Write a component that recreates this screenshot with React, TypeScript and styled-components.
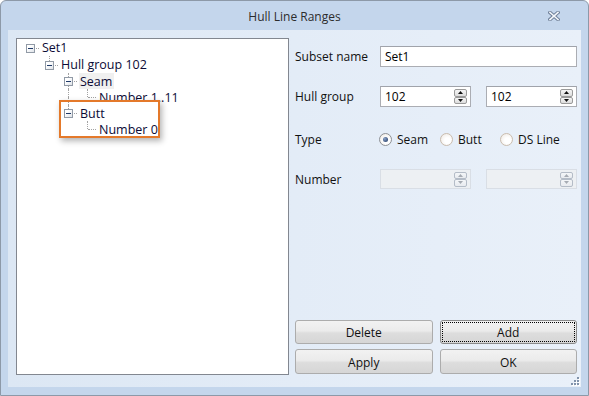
import React from 'react';
import styled, { createGlobalStyle, css } from 'styled-components';

type TreeNode = {
  label: string;
  cells: CellKind[];
  h: number;
  selected?: boolean;
};

type CellKind = 'blank' | 'pipe' | 'root' | 'first' | 'mid' | 'last' | 'leaf';

const nodes: TreeNode[] = [
  { label: 'Set1', cells: ['root'], h: 17 },
  { label: 'Hull group 102', cells: ['blank', 'first'], h: 17 },
  { label: 'Seam', cells: ['blank', 'blank', 'mid'], h: 16, selected: true },
  { label: 'Number 1..11', cells: ['blank', 'blank', 'pipe', 'leaf'], h: 16 },
  { label: 'Butt', cells: ['blank', 'blank', 'last'], h: 16 },
  { label: 'Number 0', cells: ['blank', 'blank', 'blank', 'leaf'], h: 16 },
];

const App = () => {
  return (
    <>
      <GlobalStyle />
      <Window>
        <TitleBar>
          <span />
          <Title>Hull Line Ranges</Title>
          <CloseButton>
            <svg width="12" height="10" viewBox="0 0 12 10">
              <path d="M2 1.5 L10 8.5 M10 1.5 L2 8.5" stroke="#71829b" strokeWidth="3.6" strokeLinecap="square" />
              <path d="M2 1.5 L10 8.5 M10 1.5 L2 8.5" stroke="#f4f7fb" strokeWidth="1.6" strokeLinecap="square" />
            </svg>
          </CloseButton>
        </TitleBar>
        <Client>
          <TreePanel>
            {nodes.map((node) => (
              <TreeRow key={node.label} $h={node.h}>
                {node.cells.map((kind, i) => (
                  <TreeCell key={i}>
                    {(kind === 'pipe' || kind === 'first' || kind === 'mid' || kind === 'last' || kind === 'leaf') && <LineUp />}
                    {(kind === 'pipe' || kind === 'mid') && <LineDown />}
                    {kind !== 'blank' && kind !== 'pipe' && <LineRight />}
                    {kind !== 'blank' && kind !== 'pipe' && kind !== 'leaf' && (
                      <Expander>
                        <Minus />
                      </Expander>
                    )}
                  </TreeCell>
                ))}
                <NodeLabel $selected={node.selected}>{node.label}</NodeLabel>
              </TreeRow>
            ))}
            <Callout />
          </TreePanel>
          <SidePanel>
            <FormGrid>
              <Label>Subset name</Label>
              <TextBox $span>Set1</TextBox>

              <Label>Hull group</Label>
              <SpinBox value="102" />
              <SpinBox value="102" />

              <Label $shift>Type</Label>
              <RadioGroup>
                <RadioItem $w={61}>
                  <RadioCircle $checked />
                  Seam
                </RadioItem>
                <RadioItem $w={60}>
                  <RadioCircle />
                  Butt
                </RadioItem>
                <RadioItem>
                  <RadioCircle />
                  DS Line
                </RadioItem>
              </RadioGroup>

              <Label>Number</Label>
              <SpinBox disabled />
              <SpinBox disabled />
            </FormGrid>
            <ButtonGrid>
              <PushButton>Delete</PushButton>
              <PushButton $focused>Add</PushButton>
              <PushButton>Apply</PushButton>
              <PushButton>OK</PushButton>
            </ButtonGrid>
          </SidePanel>
          <Grip>
            <svg width="10" height="10" viewBox="0 0 10 10">
              {[
                [7, 1],
                [4, 4],
                [7, 4],
                [1, 7],
                [4, 7],
                [7, 7],
              ].map(([x, y]) => (
                <g key={`${x}-${y}`}>
                  <rect x={x + 1} y={y + 1} width="2" height="2" fill="#ffffff" />
                  <rect x={x} y={y} width="2" height="2" fill="#8193ab" />
                </g>
              ))}
            </svg>
          </Grip>
        </Client>
      </Window>
    </>
  );
};

const SpinBox = ({ value, disabled }: { value?: string; disabled?: boolean }) => (
  <SpinField $disabled={disabled}>
    <SpinValue>{value}</SpinValue>
    <SpinButtons>
      <SpinHalf $disabled={disabled}>
        <svg width="5" height="3" viewBox="0 0 5 3">
          <path d="M2.5 0 L5 3 L0 3 Z" fill={disabled ? '#a6abb3' : '#111'} />
        </svg>
      </SpinHalf>
      <SpinHalf $disabled={disabled}>
        <svg width="5" height="3" viewBox="0 0 5 3">
          <path d="M0 0 L5 0 L2.5 3 Z" fill={disabled ? '#a6abb3' : '#111'} />
        </svg>
      </SpinHalf>
    </SpinButtons>
  </SpinField>
);

export default App;

const GlobalStyle = createGlobalStyle`
  body {
    margin: 0;
    font-family: "Open Sans", "Noto Sans", sans-serif;
    font-size: 12px;
  }
`;

const Window = styled.div`
  box-sizing: border-box;
  width: 589px;
  height: 396px;
  display: flex;
  flex-direction: column;
  background: #c4d6ec;
  border: 1px solid #8d99a8;
  border-radius: 6px 6px 0 0;
  overflow: hidden;
`;

const TitleBar = styled.div`
  height: 29px;
  flex-shrink: 0;
  display: grid;
  grid-template-columns: 1fr auto 1fr;
  align-items: center;
`;

const Title = styled.div`
  color: #2c2c2c;
  font-size: 12px;
  padding-top: 1px;
`;

const CloseButton = styled.div`
  justify-self: end;
  margin-right: 28px;
  display: flex;
  padding-top: 1px;
`;

const Client = styled.div`
  flex: 1;
  position: relative;
  display: flex;
  gap: 6px;
  margin: 0 7px 8px 7px;
  padding: 8px 4px 12px 8px;
  background: linear-gradient(90deg, #dce7f4 0%, #e3ecf7 50%, #e9f0f9 100%);
`;

const TreePanel = styled.div`
  position: relative;
  width: 273px;
  box-sizing: border-box;
  flex-shrink: 0;
  background: #ffffff;
  border: 1px solid #828790;
  padding: 0 0 0 4px;
  font-size: 12.5px;
  color: #0b0b36;
`;

const TreeRow = styled.div<{ $h: number }>`
  display: flex;
  align-items: stretch;
  height: ${(p) => p.$h}px;
`;

const TreeCell = styled.div`
  position: relative;
  width: 19px;
  flex-shrink: 0;
`;

const dotted = css`
  position: absolute;
  border-color: #a2a2a2;
  border-style: dotted;
  border-width: 0;
`;

const LineUp = styled.span`
  ${dotted};
  left: 9px;
  top: 0;
  height: 50%;
  border-left-width: 1px;
`;

const LineDown = styled.span`
  ${dotted};
  left: 9px;
  top: 50%;
  bottom: 0;
  border-left-width: 1px;
`;

const LineRight = styled.span`
  ${dotted};
  left: 10px;
  right: 1px;
  top: 50%;
  border-top-width: 1px;
`;

const Expander = styled.span`
  position: absolute;
  left: 5px;
  top: 50%;
  margin-top: -4px;
  width: 9px;
  height: 9px;
  box-sizing: border-box;
  border: 1px solid #919aa6;
  background: linear-gradient(135deg, #ffffff 30%, #dfe3e8 100%);
  display: flex;
  align-items: center;
  justify-content: center;
`;

const Minus = styled.span`
  width: 5px;
  height: 1px;
  background: #1f3a68;
`;

const NodeLabel = styled.span<{ $selected?: boolean }>`
  margin-left: 1px;
  padding: 1px 2px 0 1px;
  line-height: 15px;
  white-space: nowrap;
  background: ${(p) => (p.$selected ? '#f0f0f0' : 'transparent')};
`;

const Callout = styled.div`
  position: absolute;
  left: 42px;
  top: 61px;
  width: 101px;
  height: 38px;
  box-sizing: border-box;
  border: 2px solid #e4792a;
  box-shadow: 2px 3px 6px rgba(0, 0, 0, 0.3);
`;

const SidePanel = styled.div`
  flex: 1;
  display: flex;
  flex-direction: column;
`;

const FormGrid = styled.div`
  display: grid;
  grid-template-columns: 70px 1fr 1fr;
  grid-template-rows: 21px 21px 24px 20px;
  column-gap: 15px;
  row-gap: 19px;
  padding-top: 8px;
  align-items: center;
`;

const Label = styled.div<{ $shift?: boolean }>`
  color: #111;
  white-space: nowrap;
  ${(p) => p.$shift && 'padding-top: 2px;'}
`;

const fieldFrame = css`
  box-sizing: border-box;
  height: 100%;
  border: 1px solid #abadb3;
  border-top-color: #a0a3aa;
  background: #ffffff;
`;

const TextBox = styled.div<{ $span?: boolean }>`
  ${fieldFrame};
  grid-column: ${(p) => (p.$span ? '2 / 4' : 'auto')};
  display: flex;
  align-items: center;
  padding-left: 4px;
  color: #000;
`;

const SpinField = styled.div<{ $disabled?: boolean }>`
  ${fieldFrame};
  display: flex;
  align-items: center;
  padding: 0 3px 0 4px;
  ${(p) =>
    p.$disabled &&
    css`
      background: #edf0f3;
      border-color: #d9dee5;
    `}
`;

const SpinValue = styled.span`
  flex: 1;
  color: #000;
`;

const SpinButtons = styled.div`
  width: 13px;
  height: 15px;
  display: flex;
  flex-direction: column;
`;

const SpinHalf = styled.div<{ $disabled?: boolean }>`
  flex: 1;
  box-sizing: border-box;
  display: flex;
  align-items: center;
  justify-content: center;
  border: 1px solid ${(p) => (p.$disabled ? '#b4bcc7' : '#9a9a9a')};
  border-radius: 2px;
  background: ${(p) =>
    p.$disabled ? 'linear-gradient(#f4f6f8, #e8ebef)' : 'linear-gradient(#f6f6f6, #dcdcdc)'};
`;

const RadioGroup = styled.div`
  grid-column: 2 / 4;
  display: flex;
  align-items: center;
  margin-left: -1px;
  padding-top: 2px;
`;

const RadioItem = styled.div<{ $w?: number }>`
  display: flex;
  align-items: center;
  gap: 5px;
  color: #111;
  ${(p) => p.$w && `width: ${p.$w}px;`}
`;

const RadioCircle = styled.span<{ $checked?: boolean }>`
  width: 13px;
  height: 13px;
  box-sizing: border-box;
  border-radius: 50%;
  border: 1px solid ${(p) => (p.$checked ? '#8d9095' : '#c9bcae')};
  background: radial-gradient(circle at 60% 60%, #ffffff 30%, #ece6df 100%);
  display: flex;
  align-items: center;
  justify-content: center;

  &::after {
    content: '';
    display: ${(p) => (p.$checked ? 'block' : 'none')};
    width: 5px;
    height: 5px;
    border-radius: 50%;
    background: radial-gradient(circle at 35% 35%, #8aa2c8, #1d355f);
  }
`;

const ButtonGrid = styled.div`
  margin-top: auto;
  margin-bottom: 1px;
  display: grid;
  grid-template-columns: 1fr 1fr;
  grid-template-rows: 24px 25px;
  column-gap: 7px;
  row-gap: 5px;
`;

const PushButton = styled.div<{ $focused?: boolean }>`
  box-sizing: border-box;
  display: flex;
  align-items: center;
  justify-content: center;
  padding-top: 1px;
  border: 1px solid #acacac;
  border-radius: 3px;
  background: linear-gradient(#f2f2f2 0%, #ebebeb 45%, #dddddd 55%, #d6d6d6 100%);
  color: #111;
  ${(p) =>
    p.$focused &&
    css`
      border-color: #8a8a8a;
      outline: 1px dotted #000;
      outline-offset: -3px;
    `}
`;

const Grip = styled.div`
  position: absolute;
  right: 1px;
  bottom: 1px;
  display: flex;
`;
